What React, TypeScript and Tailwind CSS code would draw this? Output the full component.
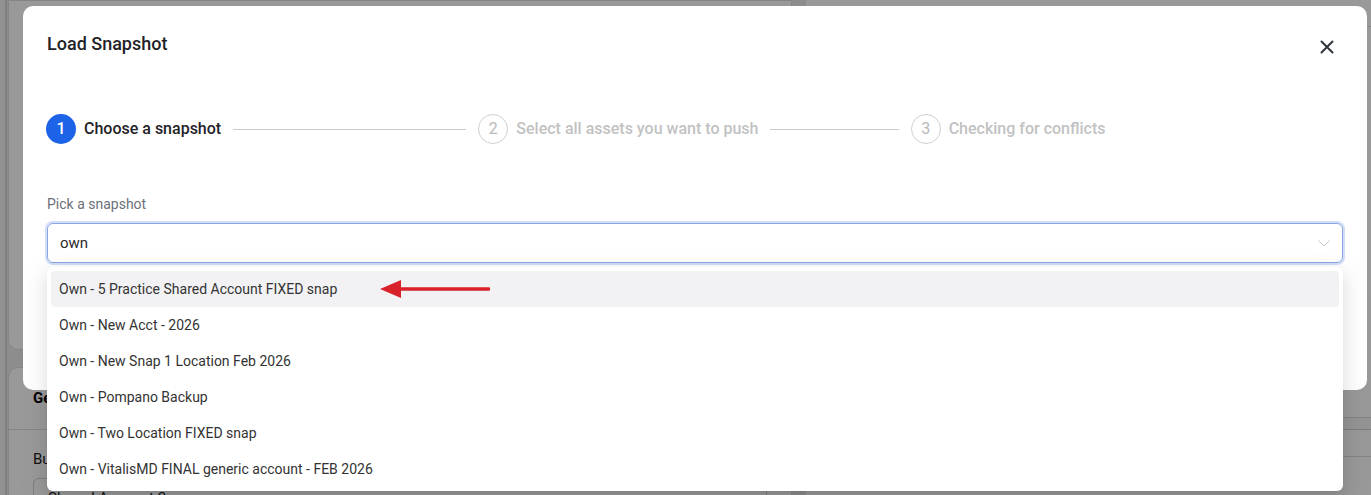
import React from "react";

const items = [
  "Own - 5 Practice Shared Account FIXED snap",
  "Own - New Acct - 2026",
  "Own - New Snap 1 Location Feb 2026",
  "Own - Pompano Backup",
  "Own - Two Location FIXED snap",
  "Own - VitalisMD FINAL generic account - FEB 2026",
];

function Step({ n, title, active, line }: { n: number; title: string; active?: boolean; line?: boolean }) {
  return (
    <div className={line ? "flex min-w-0 items-center pr-3" : "flex min-w-0 items-center"}>
      {active ? (
        <div className="flex h-[30px] w-[30px] shrink-0 items-center justify-center rounded-full bg-[#1c63e8] text-[16px] font-medium text-white">
          {n}
        </div>
      ) : (
        <div className="flex h-[30px] w-[30px] shrink-0 items-center justify-center rounded-full border border-[#cfcfcf] text-[16px] text-[#b8b8b8]">
          {n}
        </div>
      )}
      <span
        className={
          active
            ? "ml-2 whitespace-nowrap text-[16px] font-medium text-[#1f2328]"
            : "ml-2 whitespace-nowrap text-[16px] font-medium text-[#c2c2c2]"
        }
      >
        {title}
      </span>
      {line && <div className="ml-3 h-px flex-1 bg-[#cccccc]" />}
    </div>
  );
}

export default function App() {
  return (
    <div className="relative h-[495px] w-[1371px] overflow-hidden bg-[#ececec] font-[Roboto,sans-serif]">
      {/* background page */}
      <div className="flex h-full">
        <div className="w-[7px] shrink-0 border-r-2 border-[#d6d6d6] bg-[#f3f3f3]" />
        <div className="ml-px flex w-[784px] shrink-0 flex-col gap-[17px]">
          <div className="h-[350px] shrink-0 rounded-b-[10px] border border-[#dedede] bg-white" />
          <div className="flex-1 rounded-t-[10px] border border-[#dedede] bg-white">
            <div className="flex h-[61px] items-center px-6 text-[15px] font-bold text-black">General Information</div>
            <div className="border-t border-[#dedede] px-6 pt-[19px]">
              <div className="text-[15px] leading-5 text-[#222]">Business Name</div>
              <div className="mt-[9px] flex h-10 items-center rounded-md border border-[#d4d4d4] bg-white px-[14px] text-[15px] text-[#222]">
                Shared Account 2
              </div>
            </div>
          </div>
        </div>
        <div className="ml-[14px] flex flex-1 flex-col">
          <div className="h-[27px] border-b border-[#dcdcdc] bg-white" />
          <div className="h-[391px] border-b border-[#dcdcdc] bg-white" />
          <div className="h-[12px] border-b border-[#d0d0d0] bg-[#f7f7f7]" />
          <div className="h-[27px] border-b border-[#dcdcdc] bg-white" />
          <div className="flex-1 bg-white" />
        </div>
      </div>
      <div className="absolute inset-0 bg-black/40" />

      {/* modal */}
      <div className="absolute left-[23px] top-[6px] h-[384px] w-[1344px] rounded-[10px] bg-white px-6 pt-6">
        <div className="flex h-7 items-start justify-between">
          <h2 className="text-[18px] font-medium leading-7 text-[#1f2328]">Load Snapshot</h2>
          <button className="mt-px flex h-8 w-8 shrink-0 items-center justify-center text-[#30353d]">
            <svg width="14" height="14" viewBox="0 0 14 14" fill="none" stroke="currentColor" strokeWidth="2" strokeLinecap="round">
              <path d="M1.5 1.5l11 11M12.5 1.5l-11 11" />
            </svg>
          </button>
        </div>

        <div className="-ml-px mt-14 grid grid-cols-3">
          <Step n={1} title="Choose a snapshot" active line />
          <Step n={2} title="Select all assets you want to push" line />
          <Step n={3} title="Checking for conflicts" />
        </div>

        <div className="mt-[50px] text-[14px] leading-5 text-[#6b7078]">Pick a snapshot</div>
        <div className="relative mt-[9px]">
          <div className="flex h-10 items-center justify-between rounded-md border border-[#8aa6e2] pl-3 pr-3 ring-2 ring-[#d2ddf8]">
            <span className="text-[15px] text-[#2a2a2a]">own</span>
            <svg width="12" height="7" viewBox="0 0 12 7" fill="none" stroke="#c4c4c4" strokeWidth="1">
              <path d="M0.5 0.5l5.5 5.5 5.5-5.5" />
            </svg>
          </div>
          <div className="absolute left-0 right-0 top-[44px] z-10 rounded-md bg-white p-1 shadow-[0_6px_16px_0_rgba(0,0,0,0.08),0_3px_6px_-4px_rgba(0,0,0,0.12),0_9px_28px_8px_rgba(0,0,0,0.05)]">
            {items.map((t, i) => (
              <div
                key={t}
                className={
                  i === 0
                    ? "flex h-9 items-center rounded bg-[#f2f2f4] px-2 text-[14px] text-[#333]"
                    : "flex h-9 items-center rounded px-2 text-[14px] text-[#333]"
                }
              >
                {t}
              </div>
            ))}
          </div>
        </div>
      </div>

      {/* annotation arrow */}
      <svg className="absolute left-[380px] top-[279px] z-20" width="112" height="20" viewBox="0 0 112 20">
        <polygon points="0,10 21,1 21,19" fill="#d9212a" />
        <rect x="18" y="8.2" width="92" height="3.6" rx="1" fill="#d9212a" />
      </svg>
    </div>
  );
}
